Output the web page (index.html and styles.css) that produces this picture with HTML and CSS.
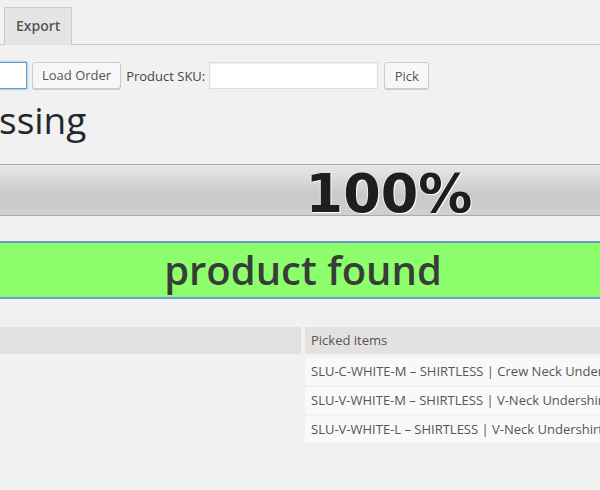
FILE: index.html
```html
<!DOCTYPE html>
<html>
<head>
<meta charset="utf-8">
<link rel="stylesheet" href="styles.css">
</head>
<body>
<div class="page">
  <div class="tabs">
    <span class="tab">Export</span>
  </div>
  <div class="form-row">
    <input class="input order-input" type="text">
    <button class="button">Load Order</button>
    <label class="label">Product SKU:</label>
    <input class="input sku-input" type="text">
    <button class="button pick">Pick</button>
  </div>
  <h1 class="title">ssing</h1>
  <div class="progress">100%</div>
  <div class="status">product found</div>
  <div class="items">
    <div class="cell head left"></div>
    <div class="cell head right">Picked items</div>
    <div class="cell left"></div>
    <div class="cell item">SLU-C-WHITE-M – SHIRTLESS | Crew Neck Undershirt</div>
    <div class="cell left"></div>
    <div class="cell item">SLU-V-WHITE-M – SHIRTLESS | V-Neck Undershirt</div>
    <div class="cell left"></div>
    <div class="cell item">SLU-V-WHITE-L – SHIRTLESS | V-Neck Undershirt</div>
  </div>
</div>
</body>
</html>
```
FILE: styles.css
```css
html, body {
  margin: 0;
  padding: 0;
  background: #f1f1f1;
}
body {
  width: 600px;
  height: 490px;
  overflow: hidden;
  font-family: "Open Sans", "Liberation Sans", sans-serif;
  color: #444;
}
.page {
  width: 600px;
}
.tabs {
  display: flex;
  padding: 7px 0 0 4px;
  border-bottom: 1px solid #ccc;
  height: 37px;
  box-sizing: content-box;
}
.tab {
  display: block;
  box-sizing: border-box;
  height: 38px;
  margin-bottom: -1px;
  padding: 6px 11px 0 11px;
  border: 1px solid #ccc;
  border-bottom: none;
  background: #e5e5e5;
  color: #555;
  font-size: 14px;
  font-weight: 600;
  line-height: 24px;
}
.form-row {
  display: flex;
  align-items: center;
  margin-top: 17px;
  height: 27px;
}
.input {
  box-sizing: border-box;
  height: 27px;
  border: 1px solid #ddd;
  background: #fff;
  box-shadow: inset 0 1px 2px rgba(0,0,0,0.07);
  padding: 0 4px;
  font: 13px "Open Sans", sans-serif;
  margin: 0;
}
.order-input {
  width: 40px;
  margin-left: -13px;
  border-color: #5b9dd9;
  box-shadow: 0 0 2px rgba(30,140,190,0.8);
}
.sku-input {
  width: 169px;
  margin-left: 4px;
}
.button {
  box-sizing: border-box;
  height: 27px;
  margin: 0 0 0 5px;
  padding: 0 9px 1px;
  border: 1px solid #ccc;
  border-radius: 3px;
  background: #f7f7f7;
  box-shadow: 0 1px 0 #ccc;
  color: #555;
  font: 13px "Open Sans", sans-serif;
  line-height: 24px;
}
.pick {
  margin-left: 6px;
  width: 45px;
  padding: 0;
}
.label {
  margin-left: 5px;
  font-size: 13px;
  color: #444;
}
.title {
  margin: 8px 0 0 -1px;
  font-size: 37px;
  font-weight: 400;
  line-height: 46px;
  color: #23282d;
}
.progress {
  margin: 21px 0 0 -200px;
  width: 1178px;
  box-sizing: border-box;
  height: 52px;
  padding-top: 7px;
  border-top: 1px solid #aaa;
  border-bottom: 1px solid #aaa;
  background: linear-gradient(#e8e8e8, #c9c9c9 60%, #d0d0d0);
  text-align: center;
  font-family: "DejaVu Sans", "Verdana", sans-serif;
  font-weight: bold;
  font-size: 54px;
  line-height: 43px;
  color: #1e1e1e;
  text-shadow: 1px 1px 0 #fff, -1px 0 0 rgba(255,255,255,0.6);
}
.status {
  margin: 25px 0 0 -200px;
  width: 1006px;
  box-sizing: border-box;
  height: 58px;
  border-top: 2px solid #6b9bc6;
  border-bottom: 2px solid #6c9cd8;
  background: #8eff6c;
  text-align: center;
  font-size: 40px;
  font-weight: 600;
  line-height: 54px;
  color: #383d38;
}
.items {
  margin: 28px 0 0 -100px;
  display: grid;
  grid-template-columns: 401px 400px;
  column-gap: 4px;
  row-gap: 2px;
}
.cell {
  height: 27px;
  box-sizing: border-box;
  padding-left: 6px;
  font-size: 13px;
  line-height: 27px;
  color: #555;
  white-space: nowrap;
  overflow: hidden;
}
.head {
  background: #e4e2e0;
  margin-bottom: 2px;
  color: #555;
}
.item {
  background: #f9f9f9;
}
```
